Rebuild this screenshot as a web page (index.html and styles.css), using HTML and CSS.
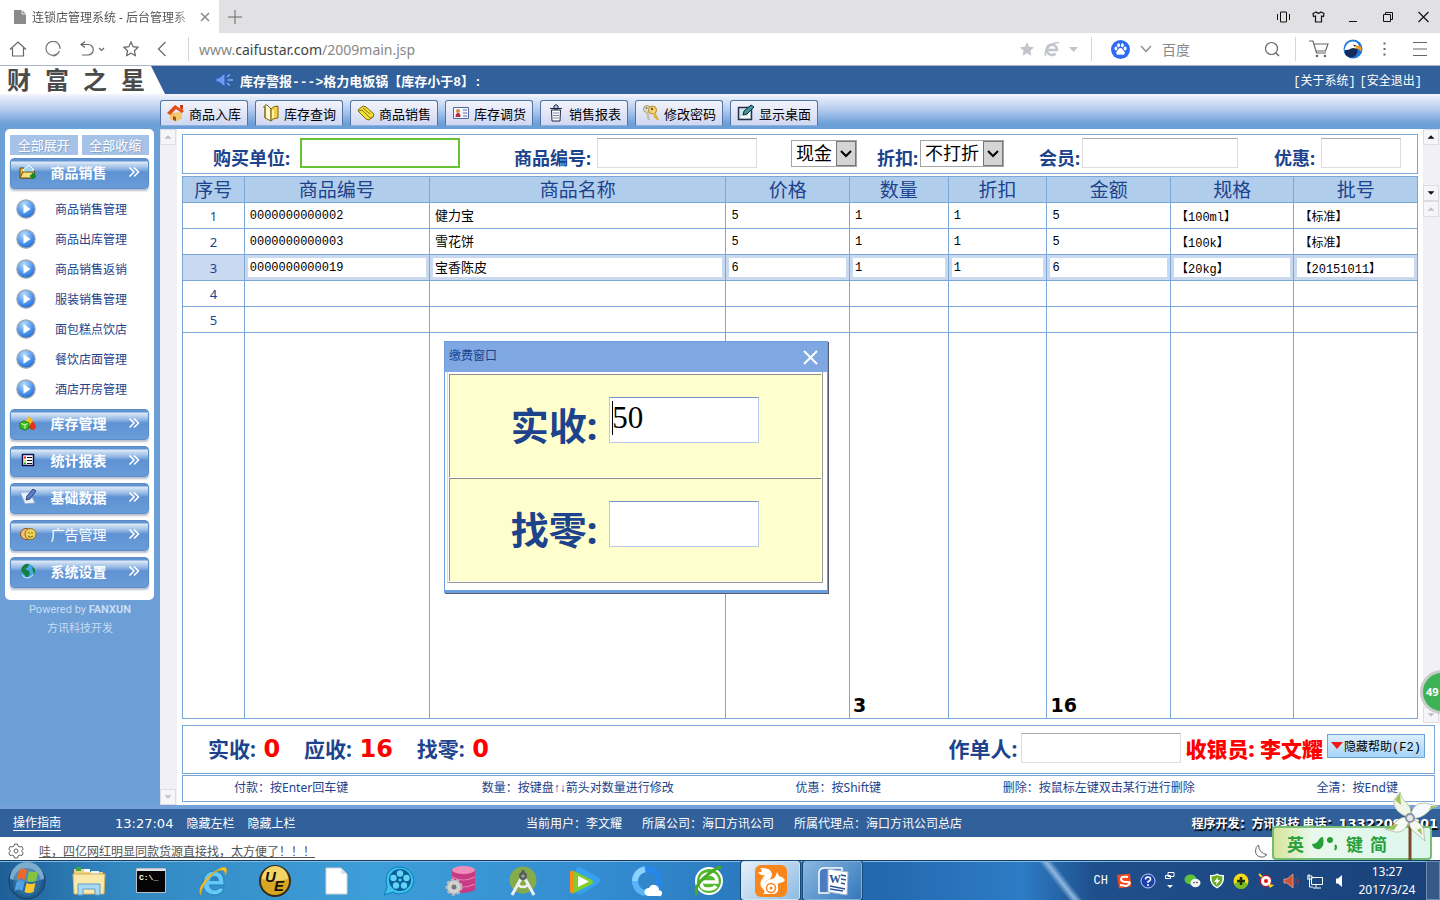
FILE: index.html
```html
<!DOCTYPE html>
<html lang="zh-CN">
<head>
    <meta charset="UTF-8">
    <meta name="viewport" content="width=device-width, initial-scale=1.0">
    <title>连锁店管理系统 - 后台管理系统</title>
    <link rel="stylesheet" href="styles.css">
</head>
<body>
    <svg class="defs" aria-hidden="true">
        <defs>
            <radialGradient id="ball" cx=".4" cy=".25" r=".8"><stop offset="0" stop-color="#b8dcff"/><stop offset=".6" stop-color="#4b94ee"/><stop offset="1" stop-color="#1f62c8"/></radialGradient>
            <symbol id="play" viewBox="0 0 20 20"><circle cx="10" cy="10" r="9.2" fill="url(#ball)" stroke="#a5a9b0" stroke-width="1.2"/><path d="M7.500 5.200v9.600l7-4.800z" fill="#fff"/></symbol>
            <symbol id="more" viewBox="0 0 12 12"><path d="M1.500 1.500 6 6l-4.500 4.500M6 1.500 10.500 6 6 10.500" fill="none" stroke="#fff" stroke-width="1.600"/></symbol>
            <symbol id="up" viewBox="0 0 16 16"><path d="M4 10h8L8 6z" fill="currentColor"/></symbol>
            <symbol id="down" viewBox="0 0 16 16"><path d="M4 6h8l-4 4z" fill="currentColor"/></symbol>
        </defs>
    </svg>

    <!-- browser tabs -->
    <div class="tabs">
        <div class="tab">
            <svg width="12" height="14" viewBox="0 0 12 14"><path d="M0 0h8l4 4v10H0z" fill="#8a8a8a"/><path d="M8 0v4h4" fill="none" stroke="#eee"/></svg>
            <span class="tab-title">连锁店管理系统 - 后台管理系</span>
            <button class="plain" aria-label="关闭标签"><svg width="10" height="10" viewBox="0 0 10 10"><path d="M1 1l8 8M9 1 1 9" stroke="#888" stroke-width="1.500"/></svg></button>
        </div>
        <button class="plain" aria-label="新标签"><svg width="14" height="14" viewBox="0 0 14 14"><path d="M7 0v14M0 7h14" stroke="#666"/></svg></button>
        <div class="window-buttons">
            <button class="plain" aria-label="侧边"><svg width="13" height="12" viewBox="0 0 13 12"><path d="M.5 3v6M12.500 3v6M3.500 1h6v10h-6z" fill="none" stroke="#111"/></svg></button>
            <button class="plain" aria-label="皮肤"><svg width="13" height="12" viewBox="0 0 13 12"><path d="M4 1 1 2.500 1.500 5.500 3.500 5v6h6V5l2 .5.500-3L9 1Q6.500 3.500 4 1z" fill="none" stroke="#111" stroke-width="1.200"/></svg></button>
            <button class="plain" aria-label="最小化"><svg width="13" height="12" viewBox="0 0 13 12"><path d="M2 10.500h8" stroke="#111"/></svg></button>
            <button class="plain" aria-label="还原"><svg width="13" height="12" viewBox="0 0 13 12"><path d="M1.500 3.500h7v7h-7zM3.500 3V1.500h7v7H9" fill="none" stroke="#111"/></svg></button>
            <button class="plain" aria-label="关闭"><svg width="13" height="12" viewBox="0 0 13 12"><path d="M1.500 1l10 10M11.500 1l-10 10" stroke="#111" stroke-width="1.200"/></svg></button>
        </div>
    </div>

    <!-- address bar -->
    <div class="address">
        <div class="nav-buttons">
            <button class="plain" aria-label="主页"><svg width="18" height="16" viewBox="0 0 18 16"><path d="M1 8.500 9 1l8 7.500M3.500 7v8h11V7" fill="none" stroke="#666" stroke-width="1.200"/></svg></button>
            <button class="plain" aria-label="刷新"><svg width="16" height="16" viewBox="0 0 16 16"><path d="M14.500 10A7 7 0 1 1 15 8M12 13.500A7 7 0 0 1 8 15" fill="none" stroke="#777" stroke-width="1.200"/></svg></button>
            <button class="plain" aria-label="恢复"><svg width="26" height="16" viewBox="0 0 26 16"><path d="M6 .5 2 3.500l4 3M2 3.500h7a5 5 0 0 1 0 10.500H3M20 7l2.500 2.500L25 7" fill="none" stroke="#666" stroke-width="1.200"/></svg></button>
            <button class="plain" aria-label="收藏"><svg width="16" height="16" viewBox="0 0 16 16"><path d="m8 1 2.100 4.700 5 .6-3.700 3.400 1 5L8 12.200l-4.400 2.500 1-5L.9 6.300l5-.6z" fill="none" stroke="#666" stroke-width="1.200"/></svg></button>
            <button class="plain" aria-label="后退"><svg width="10" height="16" viewBox="0 0 10 16"><path d="M8.500 1 1.500 8l7 7" fill="none" stroke="#666" stroke-width="1.200"/></svg></button>
        </div>
        <span class="url">www.<b>caifustar.com</b>/2009main.jsp</span>
        <div class="url-tools">
            <svg width="16" height="16" viewBox="0 0 16 16"><path d="m8 1 2.100 4.700 5 .6-3.700 3.400 1 5L8 12.200l-4.400 2.500 1-5L.9 6.300l5-.6z" fill="#c2c4cc"/></svg>
            <svg width="16" height="16" viewBox="0 0 16 16"><path d="M3 9h10a5.200 5.200 0 1 0-1.500 3.500" fill="none" stroke="#c2c4cc" stroke-width="2.500"/><path d="M2 15Q-1 11 6 5q6-5 9-3" fill="none" stroke="#c2c4cc" stroke-width="1.500"/></svg>
            <svg width="10" height="5" viewBox="0 0 10 5"><path d="M0 0h9L4.500 5z" fill="#c2c4cc"/></svg>
        </div>
        <div class="search">
            <svg width="19" height="19" viewBox="0 0 20 20"><circle cx="10" cy="10" r="10" fill="#2f6df0"/><g fill="#fff"><ellipse cx="5.200" cy="9" rx="1.500" ry="2.100"/><ellipse cx="8" cy="5.500" rx="1.500" ry="2.200"/><ellipse cx="12" cy="5.500" rx="1.500" ry="2.200"/><ellipse cx="14.900" cy="9" rx="1.500" ry="2.100"/><path d="M10 8.500c2 0 2.500 2 4 3.500 1.500 2-.5 4-2 3.500q-2-.6-4 0c-1.500.5-3.500-1.500-2-3.500 1.500-1.500 2-3.500 4-3.500z"/></g></svg>
            <svg width="12" height="8" viewBox="0 0 12 8"><path d="m1 1 5 5.500L11 1" fill="none" stroke="#888" stroke-width="1.300"/></svg>
            <input class="search-input" type="text" placeholder="百度" aria-label="百度搜索">
            <button class="plain" aria-label="搜索"><svg width="16" height="16" viewBox="0 0 16 16"><circle cx="7.500" cy="7.500" r="6" fill="none" stroke="#666" stroke-width="1.200"/><path d="m12 12 3 3" stroke="#666" stroke-width="1.400"/></svg></button>
        </div>
        <div class="extras">
            <svg width="20" height="18" viewBox="0 0 20 18"><path d="M0 1h4l3.500 12H17M5 4h14l-2.500 7H7" fill="none" stroke="#666" stroke-width="1.200"/><circle cx="8" cy="16" r="1.300" fill="#666"/><circle cx="16" cy="16" r="1.300" fill="#666"/></svg>
            <svg width="20" height="20" viewBox="0 0 20 20"><circle cx="10" cy="10" r="9.500" fill="#1d78de"/><path d="M2 15Q1 10 5 8l9 1q2 5-3 9-6 1.500-9-3z" fill="#152a5c"/><path d="M1.500 11Q3 3 9 2.500q5-.5 7 4l-3 3q-3-1-5 0-3 2-6.500 1.500z" fill="#fff"/><path d="M13 6.500q5-.5 5.500 3 0 2-1 3-.5-2.500-4.500-3z" fill="#f39a20"/><path d="M10 5.500l3 1-1 1.500z"/></svg>
            <svg width="4" height="16" viewBox="0 0 4 16"><path d="M.5 1.500h2v2h-2zM.5 7h2v2h-2zM.5 12.500h2v2h-2z" fill="#666"/></svg>
            <svg width="14" height="16" viewBox="0 0 14 16"><path d="M0 1.500h14M0 8h14M0 14.500h14" stroke="#666" stroke-width="1.200"/></svg>
        </div>
    </div>

    <!-- top banner -->
    <header class="banner">
        <h1 class="logo"><span>财</span><span>富</span><span>之</span><span>星</span></h1>
        <svg width="17" height="14" viewBox="0 0 17 14"><path d="M0 5h3l6-5v14L3 9H0z" fill="#6f9cf5" stroke="#2a55c5"/><path d="m11 4 3-2.500M11.500 7H17M11 10l3 2.500" stroke="#7fb0ff" stroke-width="1.300"/></svg>
        <p class="alarm">库存警报---&gt;格力电饭锅【库存小于8】:</p>
        <nav class="system-links"><a href="#about">[关于系统]</a><a href="#exit">[安全退出]</a></nav>
    </header>

    <div class="toolbar">
        <button class="tool"><svg width="18" height="18" viewBox="0 0 18 18"><path d="M3 9v6l6 2.500 6-3V8z" fill="#f3c66d"/><path d="M0 9 8 1l9 6-2 2-6-4-6 6z" fill="#e34a14"/><path d="M6 12l3 1v4l-3-1z" fill="#a8501c"/><path d="M13 1h3v5l-3-2z" fill="#c43c10"/></svg>商品入库</button>
        <button class="tool"><svg width="18" height="18" viewBox="0 0 18 18"><path d="M1 3h2v11l6 3V5L5 1H3v13" fill="#fffbd0" stroke="#7b6412"/><path d="M9 5q2-3 7-3v12q-5 0-7 3z" fill="#f4d04a" stroke="#7b6412"/><path d="M11 6v8" stroke="#fff3a4" stroke-width="2"/></svg>库存查询</button>
        <button class="tool"><svg width="18" height="18" viewBox="0 0 18 18"><path d="m1 6 5-4 3 1 8 7-1 3-4 3-3-1-7-7z" fill="#f4df37" stroke="#7d6c10"/><path d="m2 7 3-1 8 8 3-1M6 4l7 6" fill="none" stroke="#8c7a14"/></svg>商品销售</button>
        <button class="tool"><svg width="18" height="18" viewBox="0 0 18 18"><path d="M1.500 3.500h15v11h-15z" fill="#f5f7ff" stroke="#52679c"/><circle cx="6" cy="7" r="2" fill="#d88a40"/><path d="M3.500 13q0-4 2.500-4t2.500 4z" fill="#b3283c"/><path d="M11 6h4M11 9h4M11 12h4" stroke="#66a"/></svg>库存调货</button>
        <button class="tool"><svg width="18" height="18" viewBox="0 0 18 18"><path d="M4.500 6h9l-.5 11H5z" fill="#fff" stroke="#1f2740"/><path d="M3 4.500h12M7 2q2-3 4 0v3H7z" fill="#b6c8ee" stroke="#1f2740"/><path d="M6 9h6M6 11.500h6M6 14h6" stroke="#7787aa"/></svg>销售报表</button>
        <button class="tool"><svg width="18" height="18" viewBox="0 0 18 18"><circle cx="5" cy="5" r="3.500" fill="#dcdcd0" stroke="#a39a72"/><circle cx="4.500" cy="4" r="1" fill="#777"/><path d="m5 8 2 8" stroke="#c3bfa8" stroke-width="2.500"/><circle cx="10.500" cy="6" r="4" fill="#f5d778" stroke="#b58a25"/><circle cx="10" cy="5" r="1.200" fill="#7d5c10"/><path d="m12 9 4 7M14 12l-2 1.500" stroke="#dcb140" stroke-width="2.500"/></svg>修改密码</button>
        <button class="tool"><svg width="18" height="18" viewBox="0 0 18 18"><path d="M1.500 3.500h13v12h-13z" fill="#cfe6e6" stroke="#23324d" stroke-width="1.500"/><path d="M4 13h8V8" fill="none" stroke="#fff" stroke-width="2"/><path d="m6 11 1-4 7-6 3 2-7 7z" fill="#3e96a0" stroke="#142b40"/></svg>显示桌面</button>
    </div>

    <main class="main">
        <aside class="sidebar">
            <div class="menu">
                <div class="menu-tools"><button>全部展开</button><button>全部收缩</button></div>
                <button class="menu-head"><svg width="18" height="16" viewBox="0 0 18 16"><path d="M1 14V4h4l2 2h8v8z" fill="#e6b944" stroke="#5a4510"/><path d="m4 6 6-5 5 5-6 5z" fill="#9fd6ef" stroke="#fff"/><path d="m1 14 3-6h12l-3 6z" fill="#f8df7b" stroke="#6a5210"/><path d="M14 9v6M11 12h6" stroke="#178a28" stroke-width="2.500"/></svg><b>商品销售</b><svg class="more"><use href="#more"/></svg></button>
                <ul class="submenu">
                    <li><svg><use href="#play"/></svg><a href="#sale">商品销售管理</a></li>
                    <li><svg><use href="#play"/></svg><a href="#out">商品出库管理</a></li>
                    <li><svg><use href="#play"/></svg><a href="#return">商品销售返销</a></li>
                    <li><svg><use href="#play"/></svg><a href="#clothes">服装销售管理</a></li>
                    <li><svg><use href="#play"/></svg><a href="#bakery">面包糕点饮店</a></li>
                    <li><svg><use href="#play"/></svg><a href="#dining">餐饮店面管理</a></li>
                    <li><svg><use href="#play"/></svg><a href="#hotel">酒店开房管理</a></li>
                </ul>
                <button class="menu-head"><svg width="18" height="16" viewBox="0 0 18 16"><path d="m10 1 5 6-5 4-4-4z" fill="#f8c01b"/><path d="m12 8 2-2 3 5q0 4-4 4l-3-2z" fill="#df3420"/><path d="m1 8 4-2 5 2v5l-4 2-5-2z" fill="#41bd24" stroke="#1b7a12"/><path d="m2 8.500 4 1.500 3-1.500M6 10v4" fill="none" stroke="#caffb0"/></svg><b>库存管理</b><svg class="more"><use href="#more"/></svg></button>
                <button class="menu-head"><svg width="18" height="16" viewBox="0 0 18 16"><path d="M3.500 2.500h11v11h-11z" fill="#fff" stroke="#101050" stroke-width="1.500"/><path d="M8 5.500h5M8 8.500h5M8 11.500h5" stroke="#111"/><path d="M5 4.500h2v2H5z" fill="#e22"/><path d="M5 7.500h2v2H5z" fill="#ed2"/><path d="M5 10.500h2v2H5z" fill="#2a2"/></svg><b>统计报表</b><svg class="more"><use href="#more"/></svg></button>
                <button class="menu-head"><svg width="18" height="16" viewBox="0 0 18 16"><path d="M1 3h10l5 11-10 1z" fill="#e8f0fc" stroke="#8ba4cf"/><path d="m7 11 1-4 6-7 3 2-6 8z" fill="#597ec4" stroke="#2d4680"/></svg><b>基础数据</b><svg class="more"><use href="#more"/></svg></button>
                <button class="menu-head"><svg width="18" height="16" viewBox="0 0 18 16"><circle cx="7" cy="8" r="5.500" fill="#eebf77" stroke="#8a4f1f"/><circle cx="11.500" cy="8" r="5.500" fill="#f0d15a" stroke="#92701b"/><path d="M10 6v1.500M13 6v1.500M9 10q2.500 2.500 5 0" fill="none" stroke="#7a5a10"/></svg><span>广告管理</span><svg class="more"><use href="#more"/></svg></button>
                <button class="menu-head"><svg width="18" height="16" viewBox="0 0 18 16"><circle cx="9" cy="8" r="7" fill="#48a7e6"/><path d="M3 4q3-4 7-3l-1 3-3 2 4 2 1 3-3 4-3-4-3-3zM13 4l3 2v5l-2-2z" fill="#15803a"/><path d="M3 12q5 6 11 0" fill="none" stroke="#d9eefb"/></svg><b>系统设置</b><svg class="more"><use href="#more"/></svg></button>
            </div>
            <p class="powered">Powered by <b>FANXUN</b></p>
            <p class="powered">方讯科技开发</p>
        </aside>
        <div class="scrollbar off">
            <svg><use href="#up"/></svg>
            <svg><use href="#down"/></svg>
        </div>

        <section class="content">
            <div class="upper">
                <div class="sheet">
                    <form class="filter">
                        <div class="field"><label for="buyer">购买单位:</label><input class="long focused" id="buyer" type="text"></div>
                        <div class="field"><label for="code">商品编号:</label><input class="long" id="code" type="text"></div>
                        <div class="field"><select aria-label="付款方式"><option>现金</option></select></div>
                        <div class="field tight"><label for="discount">折扣:</label><select id="discount"><option>不打折</option></select></div>
                        <div class="field tight"><label for="member">会员:</label><input class="member" id="member" type="text"></div>
                        <div class="field"><label for="off">优惠:</label><input class="short" id="off" type="text"></div>
                    </form>
                    <div class="table-box">
                        <table class="goods">
                            <colgroup><col class="c5"><col class="c15"><col class="c24"><col class="c10"><col class="c8"><col class="c8"><col class="c10"><col class="c10"><col class="c10"></colgroup>
                            <thead>
                                <tr><th>序号</th><th>商品编号</th><th>商品名称</th><th>价格</th><th>数量</th><th>折扣</th><th>金额</th><th>规格</th><th>批号</th></tr>
                            </thead>
                            <tbody>
                                <tr><td>1</td><td><input aria-label="商品编号" value="0000000000002"></td><td><input class="name" aria-label="商品名称" value="健力宝"></td><td><input aria-label="价格" value="5"></td><td><input aria-label="数量" value="1"></td><td><input aria-label="折扣" value="1"></td><td><input aria-label="金额" value="5"></td><td><input aria-label="规格" value="【100ml】"></td><td><input aria-label="批号" value="【标准】"></td></tr>
                                <tr><td>2</td><td><input aria-label="商品编号" value="0000000000003"></td><td><input class="name" aria-label="商品名称" value="雪花饼"></td><td><input aria-label="价格" value="5"></td><td><input aria-label="数量" value="1"></td><td><input aria-label="折扣" value="1"></td><td><input aria-label="金额" value="5"></td><td><input aria-label="规格" value="【100k】"></td><td><input aria-label="批号" value="【标准】"></td></tr>
                                <tr class="selected"><td>3</td><td><input aria-label="商品编号" value="0000000000019"></td><td><input class="name" aria-label="商品名称" value="宝香陈皮"></td><td><input aria-label="价格" value="6"></td><td><input aria-label="数量" value="1"></td><td><input aria-label="折扣" value="1"></td><td><input aria-label="金额" value="6"></td><td><input aria-label="规格" value="【20kg】"></td><td><input aria-label="批号" value="【20151011】"></td></tr>
                                <tr><td>4</td><td></td><td></td><td></td><td></td><td></td><td></td><td></td><td></td></tr>
                                <tr><td>5</td><td></td><td></td><td></td><td></td><td></td><td></td><td></td><td></td></tr>
                                <tr class="total"><td></td><td></td><td></td><td></td><td>3</td><td></td><td>16</td><td></td><td></td></tr>
                            </tbody>
                        </table>
                    </div>
                </div>
                <div class="bars">
                    <div class="scrollbar on"><svg><use href="#up"/></svg><svg><use href="#down"/></svg></div>
                    <div class="scrollbar off"><svg><use href="#up"/></svg><svg><use href="#down"/></svg></div>
                </div>
            </div>

            <div class="summary">
                <p>实收: <b>0</b></p>
                <p>应收: <b>16</b></p>
                <p>找零: <b>0</b></p>
                <div class="cashier">
                    <label for="maker">作单人:</label><input class="long" id="maker" type="text">
                    <strong>收银员: 李文耀</strong>
                    <button class="help-toggle"><svg width="12" height="7" viewBox="0 0 12 7"><path d="M0 0h12L6 7z" fill="#f01818"/></svg>隐藏帮助(F2)</button>
                </div>
            </div>
            <div class="help">
                <span class="pay-key">付款：按Enter回车键</span>
                <span>数量：按键盘<span class="arrows">↑↓</span>箭头对数量进行修改</span>
                <span>优惠：按Shift键</span>
                <span>删除：按鼠标左键双击某行进行删除</span>
                <span>全清：按End键</span>
            </div>
        </section>

        <div class="dialog" role="dialog" aria-labelledby="pay-title">
            <div class="dialog-head">
                <h2 id="pay-title">缴费窗口</h2>
                <button class="plain" aria-label="关闭窗口"><svg width="15" height="15" viewBox="0 0 15 15"><path d="m1 1 13 13M14 1 1 14" stroke="#fff" stroke-width="2"/></svg></button>
            </div>
            <div class="dialog-body">
                <div class="pay-row"><label for="paid">实收:</label><div class="pay-input caret"><input id="paid" type="text" value="50"></div></div>
                <div class="pay-row"><label for="change">找零:</label><div class="pay-input"><input id="change" type="text"></div></div>
            </div>
        </div>
    </main>

    <footer class="status">
        <div class="status-left"><a class="guide" href="#guide">操作指南</a><span class="time">13:27:04</span><a href="#left">隐藏左栏</a><a href="#top">隐藏上栏</a></div>
        <div class="status-mid"><span>当前用户：李文耀</span><span>所属公司：海口方讯公司</span><span>所属代理点：海口方讯公司总店</span></div>
        <p class="developer">程序开发：方讯科技 电话：<b>13322098801</b></p>
    </footer>

    <div class="news">
        <svg width="16" height="16" viewBox="0 0 16 16"><path d="m6.500 1-.5 2-2 1-2-.5L.8 6 2.500 8 .8 10 2 12.500 4 12l2 1 .5 2h3l.5-2 2-1 2 .5 1.200-2.500L13.500 8l1.700-2L14 3.500 12 4l-2-1-.5-2z" fill="none" stroke="#666"/><circle cx="8" cy="8" r="2" fill="none" stroke="#666"/></svg>
        <a href="#news">哇，四亿网红明显同款货源直接找，太方便了！！！</a>
        <svg class="moon" width="14" height="14" viewBox="0 0 14 14"><path d="M4.500 1Q5 9.500 13 10.500 10 14 6 13 1.500 11.500 1.500 7 1.500 3 4.500 1z" fill="none" stroke="#666"/></svg>
    </div>

    <!-- windows taskbar -->
    <div class="taskbar">
        <button class="start" aria-label="开始"><svg width="38" height="38" viewBox="0 0 38 38"><circle cx="19" cy="19" r="18" fill="#235a8c" stroke="#123c66"/><path d="M2 17a17 17 0 0 1 34 0q-17 6-34 0z" fill="#7cadcf"/><circle cx="19" cy="20" r="14" fill="#2f74a8" opacity=".6"/><path d="M11 8q4-3 8 0l-2 10q-4-3-8 0z" fill="#ee6a2a"/><path d="M21 9q4 2 9 0l-2 10q-5 2-9 0z" fill="#86c440"/><path d="M8.500 20q4-3 8 0l-2 9q-4-3-8 0z" fill="#50a4e6"/><path d="M18.500 21q4 2 9 0l-2 9q-5 2-9 0z" fill="#fcc62f"/></svg></button>
        <button class="task" aria-label="资源管理器"><svg width="34" height="30" viewBox="0 0 34 30"><path d="M2 3h10l2 3h17v22H2z" fill="#eed27f"/><path d="M4 1h5v4H4z" fill="#3fa650"/><path d="M12 3h6v3h-6z" fill="#fff"/><path d="M19 5h8v3h-8z" fill="#e9f3ff"/><path d="M1 8h32l-1 20H2z" fill="#fae9ab" stroke="#d3b35b"/><path d="M6 29V18h22v11h-5v-6H11v6z" fill="#a9daf4" stroke="#5c9fc8"/></svg></button>
        <button class="task" aria-label="命令行"><svg width="30" height="25" viewBox="0 0 30 25"><path d="M.5.5h29v24H.5z" fill="#050505" stroke="#b8bfc8"/><path d="M1 1h28v2H1z" fill="#dfe3e8"/><text x="3" y="12" class="cmd-text">C:\_</text></svg></button>
        <button class="task" aria-label="浏览器"><svg width="32" height="32" viewBox="0 0 32 32"><path d="M27 20H12.500q.5 5 5.500 5 3 0 4-2h5q-2 7-10 7Q6 29 6 18 7 6 17.500 6 28 7 27 20z" fill="#65c9f7" stroke="#237fc1"/><path d="M12.500 16q1-5 5-5t4.500 5z" fill="#2d80be"/><path d="M4 30Q-1 24 12 11 25 0 29 3q2 3-1 7 1-5-4-5-6 0-14 11-7 9-6 14z" fill="#f8c832" stroke="#d39b13" stroke-width=".7"/></svg></button>
        <button class="task" aria-label="UltraEdit"><svg width="32" height="32" viewBox="0 0 32 32"><circle cx="16" cy="16" r="15" fill="#d7a622" stroke="#332a1a" stroke-width="2"/><path d="M3 14a13 13 0 0 1 26 0q-13 4-26 0z" fill="#f3d569"/><text x="6" y="17" class="ue-text">U</text><text x="15" y="26" class="ue-text">E</text></svg></button>
        <button class="task" aria-label="文档"><svg width="24" height="28" viewBox="0 0 24 28"><path d="M1 1h15l6 6v20H1z" fill="#fff" stroke="#cbd3dd"/><path d="M16 1v6h6z" fill="#dbe1e9"/></svg></button>
        <button class="task" aria-label="视频"><svg width="32" height="32" viewBox="0 0 32 32"><path d="M1 30l3-8Q0 6 13 2q16-1 18 13-1 13-15 14-3 0-6-2z" fill="#3fc1ee" stroke="#087eb5"/><circle cx="17" cy="15" r="11" fill="#075f96"/><g fill="#63d3f8"><circle cx="17" cy="8.500" r="3.200"/><circle cx="23.500" cy="13" r="3.200"/><circle cx="21" cy="20.500" r="3.200"/><circle cx="13" cy="20.500" r="3.200"/><circle cx="10.500" cy="13" r="3.200"/><circle cx="17" cy="15" r="1.500"/></g></svg></button>
        <button class="task" aria-label="数据库"><svg width="32" height="32" viewBox="0 0 32 32"><path d="M7 5v20q11 6 23 0V5z" fill="#c83a83"/><ellipse cx="18.500" cy="5" rx="11.500" ry="4" fill="#f08dba"/><path d="M7 12q11 6 23 0M7 19q11 6 23 0" fill="none" stroke="#e27fb0" stroke-width="1.200"/><circle cx="9" cy="22" r="7" fill="#ccc" stroke="#bbb" stroke-width="3" stroke-dasharray="3 2"/><circle cx="9" cy="22" r="6" fill="#d2d2d2"/><circle cx="9" cy="22" r="2.500" fill="#777"/></svg></button>
        <button class="task" aria-label="Android Studio"><svg width="30" height="32" viewBox="0 0 30 32"><circle cx="15" cy="15" r="13.500" fill="#84ac4c"/><path d="M15 10 4 30M15 10l11 20" stroke="#eef1f3" stroke-width="3"/><path d="M9 19q6 6 12 0" fill="none" stroke="#eef1f3" stroke-width="2.500"/><circle cx="15" cy="11" r="4" fill="#575d5f"/><path d="M15 5v5" stroke="#575d5f" stroke-width="3"/><circle cx="15" cy="11" r="1.500" fill="#a4b398"/></svg></button>
        <button class="task" aria-label="播放器"><svg width="34" height="30" viewBox="0 0 34 30"><path d="M8 2q3-2 6 0l17 10q3 3 0 5L14 28q-5 2-6-2z" fill="#36a0f1"/><path d="M2 7q0-3 4-2l18 9q2 2 0 4L6 27q-4 1-4-3z" fill="#80cf2b"/><path d="M2 7q0-3 4-2v22q-4 1-4-3z" fill="#fb8b1c"/><path d="M10 10v11l11-5.500z" fill="#fff"/></svg></button>
        <button class="task" aria-label="QQ浏览器"><svg width="32" height="32" viewBox="0 0 32 32"><circle cx="16" cy="16" r="12" fill="none" stroke="#2688eb" stroke-width="6"/><path d="M4 16A12 12 0 0 1 14 4.200" fill="none" stroke="#8bd2ff" stroke-width="6"/><path d="M4 16a12 12 0 0 0 10 12" fill="none" stroke="#5ab4f5" stroke-width="6"/><path d="M17 31q-4-1-3.500-4.500T18 23q2-4 6-3t4 5q4 1 3 4t-3 2z" fill="#fff"/></svg></button>
        <button class="task" aria-label="360浏览器"><svg width="32" height="32" viewBox="0 0 32 32"><circle cx="16" cy="16" r="13" fill="#52b82e" stroke="#fff" stroke-width="2"/><path d="M9 17h15q0-8-8-8t-8 8 8 7q5 0 7-3" fill="none" stroke="#fff" stroke-width="3.500"/><path d="M4 30Q0 22 12 12 22 3 28 2" fill="none" stroke="#48ab22" stroke-width="3"/></svg></button>
        <button class="task current" aria-label="UC浏览器"><svg width="34" height="34" viewBox="0 0 34 34"><rect x="1" y="1" width="32" height="32" rx="6" fill="#f9851d"/><path d="M6 4q11-1 12 6 0 4-4 6-3 1-3 3 3-4 7-4 3-1 4-4l1-3 2 4q4 1 6 4-2 3-6 3-2 1-1 4 1 6-4 7H9q3-2 0-5-4-3-2-8 2-4 4-6-5 1-7-3 3 1 4-1-1-2-2-3z" fill="#fff"/><circle cx="17" cy="24" r="4.500" fill="none" stroke="#f9851d" stroke-width="1.500"/><circle cx="17" cy="24" r="1.500" fill="#f9851d"/></svg></button>
        <button class="task open" aria-label="Word"><svg width="32" height="30" viewBox="0 0 32 30"><path d="M2 27V7q0-5 6-5h17v3H12v22z" fill="#4d7bc0" stroke="#fff" stroke-width="1.500"/><path d="M11 3 31 6l-1 23-19-3z" fill="#fff" stroke="#a2b8d9"/><text x="12" y="17" class="word-text">W</text><path d="M24 9l5 1M24 13l5 1M24 17l4 1M13 20l15 3M13 23l13 2" stroke="#2c5498" stroke-width="1.500"/></svg></button>

        <div class="tray">
            <span class="lang">CH</span>
            <svg width="16" height="16" viewBox="0 0 16 16"><path d="m1 2 13-1.500 1.500 13L3 15.500z" fill="#f04a1d"/><path d="M12 4Q5 3 5 6t6 3-.5 4L4 12" fill="none" stroke="#fff" stroke-width="2"/></svg>
            <svg width="16" height="16" viewBox="0 0 16 16"><circle cx="8" cy="8" r="7" fill="#1c3fae" stroke="#c3cff0"/><path d="M5.500 6.500q0-2.500 2.500-2.500t2.500 2-2.500 2.500V10" fill="none" stroke="#fff" stroke-width="1.500"/><circle cx="8" cy="12" r="1" fill="#fff"/></svg>
            <svg width="12" height="20" viewBox="0 0 12 20"><path d="M4 1.500h6v4H4zM1.500 4.500h5v3h-5z" fill="none" stroke="#fff"/><path d="M3 14h6l-3 3z" fill="#fff"/></svg>
            <svg width="17" height="16" viewBox="0 0 17 16"><ellipse cx="6.500" cy="6.500" rx="6" ry="5" fill="#5ec23c"/><ellipse cx="11.500" cy="10" rx="5" ry="4.200" fill="#f3f5f3"/><circle cx="10" cy="9.500" r=".7"/><circle cx="13" cy="9.500" r=".7"/></svg>
            <svg width="16" height="16" viewBox="0 0 16 16"><path d="M8 .5q3 2 7 1.500 1 10-7 13.500Q0 12 1 2q4 .5 7-1.500z" fill="#fff"/><path d="M8 2q3 1.500 5.500 1.200Q14 11 8 14 2 11 2.500 3.200 5 3.500 8 2z" fill="#6aab28"/><path d="M9 4 5 9h2.500L7 12l4-5H8.500z" fill="#fff"/></svg>
            <svg width="17" height="16" viewBox="0 0 17 16"><circle cx="8" cy="8" r="7.500" fill="#f5d81b"/><path d="M1 11q7-5 14 0-2 5-7 5t-7-5z" fill="#7dbb1e"/><path d="M8 4v8M4 8h8" stroke="#17320d" stroke-width="2.500"/></svg>
            <svg width="17" height="16" viewBox="0 0 17 16"><path d="m1 1 4 4" stroke="#f3d71d" stroke-width="2"/><circle cx="8" cy="8" r="5.500" fill="#fff" stroke="#d02"/><circle cx="8" cy="8" r="2" fill="#e11"/><path d="m10 11 6 1-4 3z" fill="#f7df27"/></svg>
            <svg width="16" height="16" viewBox="0 0 16 16"><path d="M1 6h3l6-5v14l-6-5H1z" fill="#c9553a" stroke="#ffb49c" stroke-width=".7"/><path d="M12 5q2 3 0 6M14 3q3 5 0 10" fill="none" stroke="#9c3a29"/></svg>
            <svg width="17" height="16" viewBox="0 0 17 16"><path d="M4.500 4.500h11v7h-11zM9 12v2.500M6 15h8M2 1v5M0 3h5v3H0zM2.500 6v8H6" fill="none" stroke="#fff"/></svg>
            <svg width="16" height="16" viewBox="0 0 16 16"><path d="M4 5.500h2L10 2v12l-4-3.500H4z" fill="#fff"/></svg>
        </div>
        <div class="clock">13:27<br>2017/3/24</div>
        <button class="show-desktop" aria-label="显示桌面"></button>
    </div>

    <!-- floating widgets -->
    <div class="speed-ball">49</div>
    <div class="ime">
        <span>英</span>
        <svg width="28" height="16" viewBox="0 0 28 16"><path d="M1 9q4 0 6-3 2-4 5-4 2 9-3 12-7 1-8-5z" fill="#27a03a"/><circle cx="19" cy="5" r="3" fill="#27a03a"/><path d="M24 10q2 2 0 5" fill="none" stroke="#27a03a" stroke-width="2"/></svg>
        <span>键</span><span>简</span>
    </div>
    <svg class="pinwheel" width="56" height="70" viewBox="0 0 56 70">
        <path d="M26 28v40" stroke="#7a4a28" stroke-width="3"/>
        <g stroke="#9db08c" stroke-width=".7">
            <path d="M26 26Q8 20 10 8l6-8q2 8 7 11 6 6 3 15z" fill="#eef5e6"/>
            <path d="M26 26Q28 10 41 11l13 3q-7 2-10 6-8 8-18 6z" fill="#f6f9fd"/>
            <path d="M26 26q16 6 14 17l1 6q-6-5-9-8-9-5-6-15z" fill="#f3f8f0"/>
            <path d="M26 26Q22 42 11 40L1 37q7-1 10-6 6-8 15-5z" fill="#f7faf3"/>
        </g>
        <path d="m11 8 5-7 1 12zM2 37q7-5 12-5l-4 6zM33 38l5 5-1-7zM47 14l5 0-7 4z" fill="#9cc25a"/>
        <circle cx="26" cy="26" r="4" fill="#e5e8ee" stroke="#8b93a2" stroke-width="2"/>
    </svg>
</body>
</html>
```
FILE: styles.css
```css
* {
    box-sizing: border-box;
}

body {
    margin: 0;
    height: 100vh;
    display: flex;
    flex-direction: column;
    overflow: hidden;
    position: relative;
    background-color: #fff;
    color: #1c438c;
    font-family: "Noto Sans", "Noto Sans CJK SC", sans-serif;
    font-size: 12px;
}

p, h1, h2, ul {
    margin: 0;
    padding: 0;
}

svg {
    display: block;
    flex: none;
}

a {
    color: inherit;
    text-decoration: none;
}

button, input, select {
    font-family: inherit;
    font-size: inherit;
    color: inherit;
}

button {
    cursor: pointer;
}

.defs {
    position: absolute;
    width: 0;
    height: 0;
}

.plain {
    padding: 0;
    border: none;
    background: none;
}

/* browser */
.tabs {
    flex: none;
    display: flex;
    align-items: center;
    gap: 9px;
    height: 33px;
    background-color: #e1e1e4;
}

.tab {
    display: flex;
    align-items: center;
    gap: 6px;
    width: 219px;
    height: 33px;
    padding: 0 9px 0 14px;
    background-color: #fff;
    color: #555;
}

.tab-title {
    flex: 1;
    white-space: nowrap;
    mask-image: linear-gradient(to right, #000 88%, transparent);
}

.window-buttons {
    display: flex;
    gap: 22px;
    margin: 0 10px 0 auto;
}

.address {
    flex: none;
    display: flex;
    align-items: center;
    height: 33px;
    border-bottom: 1px solid #aab4c4;
}

.nav-buttons {
    display: flex;
    align-items: center;
    gap: 18px;
    width: 189px;
    height: 24px;
    padding-left: 9px;
    border-right: 1px solid #d5d5dc;
}

.url {
    padding-left: 10px;
    font-size: 14px;
    color: #888;
}

.url b {
    font-weight: normal;
    color: #444;
}

.url-tools {
    display: flex;
    align-items: center;
    gap: 9px;
    margin-left: auto;
    padding-right: 12px;
}

.search {
    display: flex;
    align-items: center;
    gap: 10px;
    width: 205px;
    height: 24px;
    padding: 0 15px 0 19px;
    border: solid #d5d5dc;
    border-width: 0 1px;
}

.search-input {
    flex: 1;
    min-width: 0;
    padding: 0;
    border: none;
    font-size: 14px;
}

.search-input::placeholder {
    color: #888;
}

.extras {
    display: flex;
    align-items: center;
    gap: 14px;
    padding: 0 13px;
}

.extras svg:nth-child(3) {
    margin: 0 12px 0 6px;
}

/* banner */
.banner {
    flex: none;
    display: flex;
    align-items: center;
    height: 28px;
    background-color: #32609a;
    color: #fff;
}

.logo {
    display: flex;
    gap: 14px;
    width: 165px;
    height: 28px;
    margin-right: 51px;
    padding-left: 7px;
    background-color: #fff;
    clip-path: polygon(0 0, 151px 0, 165px 100%, 0 100%);
    color: #4a4a4a;
    font-size: 24px;
    line-height: 28px;
}

.alarm, .system-links {
    font-family: "Liberation Mono", "Noto Sans CJK SC", monospace;
}

.alarm {
    padding-left: 7px;
    font-size: 13px;
    font-weight: bold;
}

.system-links {
    display: flex;
    gap: 4px;
    margin: 0 18px 0 auto;
}

.toolbar {
    flex: none;
    display: flex;
    gap: 7px;
    height: 35px;
    padding: 6px 0 0 160px;
    background: linear-gradient(#f2f5fc, #b3cbee 45%, #6b9fd8 85%);
}

.tool {
    display: flex;
    align-items: center;
    justify-content: center;
    gap: 4px;
    width: 88px;
    height: 26px;
    padding: 0;
    border: 1px solid #5375a6;
    border-bottom-color: #8fb0de;
    border-radius: 3px 3px 0 0;
    background: linear-gradient(#f3f4fb, #d0d7f2);
    color: #000;
    font-size: 13px;
    white-space: nowrap;
}

.main {
    position: relative;
    flex: 1;
    display: flex;
    min-height: 0;
    border-bottom: 4px solid #74a1da;
}

/* sidebar */
.sidebar {
    flex: none;
    width: 160px;
    background-color: #6b9fd6;
    text-align: center;
}

.menu {
    display: flex;
    flex-direction: column;
    gap: 6px;
    margin: 0 6px 0 5px;
    padding: 6px 5px 12px;
    border-radius: 5px;
    background-color: #fff;
}

.menu-tools {
    display: flex;
    gap: 4px;
    height: 20px;
    margin-bottom: -3px;
}

.menu-tools button {
    flex: 1;
    padding: 0;
    border: none;
    background-color: #a6c2e6;
    color: #fff;
    font-size: 13px;
    line-height: 20px;
    text-shadow: 1px 1px #8aa6cc;
}

.menu-head {
    display: flex;
    align-items: center;
    height: 31px;
    padding: 0 8px 3px;
    border: 1px solid #5b8cc8;
    border-radius: 4px;
    background: linear-gradient(#5f93d2 2px, #dfeaf8 3px, #8db3e2 10px, #5e92d2 13px, #699cd8);
    box-shadow: 0 2px 2px #b9c2cf;
    color: #fff;
    font-size: 14px;
}

.menu-head b, .menu-head span {
    flex: 1;
    padding-right: 8px;
}

.more {
    width: 12px;
    height: 12px;
}

.submenu {
    list-style: none;
    margin: -1px 0;
}

.submenu li {
    display: flex;
    align-items: center;
    height: 30px;
    padding-left: 6px;
}

.submenu svg {
    width: 20px;
    height: 20px;
}

.submenu a {
    margin-left: 19px;
    padding-bottom: 1px;
}

.powered {
    color: #c9dcf4;
    font-family: Roboto, "Noto Sans CJK SC", sans-serif;
    font-size: 11px;
    line-height: 19px;
}

/* scrollbars */
.scrollbar {
    flex: none;
    display: flex;
    flex-direction: column;
    justify-content: space-between;
    width: 17px;
    background-color: #f1f0f7;
    color: #111;
}

.scrollbar svg {
    width: 16px;
    height: 16px;
    border: 1px solid #dcdce4;
    background-color: #f6f6f9;
}

.off {
    color: #c0c0c4;
}

.on {
    height: 72px;
}

.bars {
    display: flex;
    flex-direction: column;
}

.bars .off {
    flex: 1;
}

/* content */
.content {
    flex: 1;
    display: flex;
    flex-direction: column;
    min-width: 0;
    padding: 0 0 3px 5px;
}

.upper {
    flex: 1;
    display: flex;
    gap: 5px;
    min-height: 0;
}

.sheet {
    flex: 1;
    display: flex;
    flex-direction: column;
    gap: 2px;
    padding: 5px 0 4px;
}

.filter, .summary, .help {
    border: 1px solid #7ba6d8;
}

.filter {
    display: grid;
    grid-template-columns: 301fr 277fr 86fr 162fr 235fr 143fr;
    height: 40px;
    padding: 0 0 2px 30px;
}

.field {
    display: flex;
    align-items: center;
    gap: 6px;
    font-size: 18px;
}

.field label {
    padding-top: 8px;
    font-weight: bold;
    white-space: nowrap;
}

.tight {
    gap: 2px;
}

input {
    min-width: 0;
    border: 1px solid #ddd;
    border-top-color: #aaa;
    background-color: #fff;
    color: #000;
}

.long, .member, .short {
    width: 160px;
    height: 30px;
}

.member {
    width: 156px;
}

.short {
    width: 80px;
}

.focused {
    border: 2px solid #66c334;
    margin-left: 4px;
}

select {
    appearance: none;
    height: 27px;
    padding: 0 24px 0 4px;
    border: 1px solid #a5a5a8;
    border-radius: 0;
    background: url("data:image/svg+xml,%3Csvg xmlns='http://www.w3.org/2000/svg' width='20' height='25'%3E%3Crect x='.5' y='.5' width='19' height='24' fill='%23d4d4d4' stroke='%23777'/%3E%3Cpath d='M5 10l5 5 5-5' fill='none' stroke='%23000' stroke-width='2'/%3E%3C/svg%3E") right center no-repeat #fff;
    color: #000;
    font-size: 18px;
    line-height: 24px;
}

.table-box {
    flex: 1;
    min-height: 0;
}

.goods {
    width: 100%;
    height: 100%;
    table-layout: fixed;
    border-collapse: collapse;
}

.c5 { width: 5%; }
.c8 { width: 8%; }
.c10 { width: 10%; }
.c15 { width: 15%; }
.c24 { width: 24%; }

.goods th, .goods td {
    height: 26px;
    padding: 0 3px;
    border: 1px solid #7ba6d8;
    line-height: 20px;
}

.goods th {
    background-color: #b1cdec;
    font-size: 19px;
    font-weight: normal;
}

.goods td:first-child {
    text-align: center;
    font-size: 13px;
}

.goods input {
    display: block;
    width: 100%;
    height: 19px;
    padding: 0 2px;
    border: none;
    font-family: "Liberation Mono", "Noto Sans CJK SC", monospace;
}

.goods .name {
    padding-bottom: 2px;
    font-size: 13px;
}

.selected td {
    background-color: #c8d9f0;
}

.goods .total td {
    height: auto;
    padding: 0 3px 3px;
    vertical-align: bottom;
    color: #000;
    font-family: "DejaVu Sans", sans-serif;
    font-size: 19px;
    font-weight: bold;
}

.summary {
    display: flex;
    align-items: center;
    gap: 24px;
    height: 49px;
    margin: 2px 5px 1px 0;
    padding: 0 9px 4px 25px;
    font-size: 21px;
    font-weight: bold;
    white-space: nowrap;
}

.summary b {
    margin-left: 2px;
    color: #f00;
    font-family: "DejaVu Sans", sans-serif;
    font-size: 24px;
}

.cashier {
    display: flex;
    align-items: center;
    gap: 4px;
    margin-left: auto;
}

.cashier strong {
    color: #f00;
}

.help-toggle {
    display: flex;
    align-items: center;
    justify-content: center;
    gap: 1px;
    width: 98px;
    height: 24px;
    margin-bottom: 4px;
    padding: 0;
    border: 1px solid #6fa3d3;
    background: linear-gradient(#dceefc, #a6d4f7);
    color: #000;
    font-family: "Liberation Mono", "Noto Sans CJK SC", monospace;
    font-size: 12px;
}

.help {
    display: flex;
    align-items: center;
    justify-content: space-between;
    height: 27px;
    margin-right: 5px;
    padding: 0 36px 3px 51px;
}

.pay-key {
    padding-right: 12px;
}

.arrows {
    font-family: "Liberation Sans", sans-serif;
}

/* payment dialog, over the sheet */
.dialog {
    position: absolute;
    left: 444px;
    top: 212px;
    width: 384px;
    border: 1px solid #6c9fe0;
    border-bottom: 3px solid #6c9fe0;
    box-shadow: 1px 1px #555c70;
    background-color: #fff;
}

.dialog-head {
    display: flex;
    align-items: center;
    justify-content: space-between;
    height: 30px;
    padding: 0 9px 0 4px;
    background-color: #7fa8e2;
}

.dialog-head h2 {
    padding-bottom: 4px;
    font-size: 12px;
    font-weight: normal;
}

.dialog-body {
    margin: 0 4px 7px 2px;
    padding: 2px 1px 0;
    border: 1px solid #9a9a9a;
    border-top: none;
    border-left-color: #ddd;
}

.pay-row {
    display: flex;
    justify-content: center;
    gap: 12px;
    height: 103px;
    margin-bottom: 1px;
    padding: 22px 1px 0 0;
    border-top: 1px solid #8e8e84;
    border-left: 1px solid #8e8e84;
    background-color: #ffffce;
}

.pay-row label {
    font-size: 38px;
    font-weight: bold;
    line-height: 56px;
}

.pay-input {
    position: relative;
}

.pay-input input {
    width: 150px;
    height: 46px;
    padding: 0 2px 5px;
    border: 1px solid #b5cbe8;
    border-top-color: #6f94c4;
    font-family: "Liberation Serif", serif;
    font-size: 31px;
}

.caret::before {
    content: "";
    position: absolute;
    left: 3px;
    top: 4px;
    width: 1px;
    height: 34px;
    background-color: #000;
}

/* bottom bars */
.status {
    flex: none;
    display: grid;
    grid-template-columns: 36% 1fr auto;
    align-items: center;
    height: 28px;
    padding: 0 2px 0 13px;
    background-color: #32609a;
    color: #fff;
}

.status-left, .status-mid {
    display: flex;
    align-items: center;
    gap: 13px;
}

.status-mid {
    gap: 20px;
}

.guide {
    margin-right: 41px;
    border-bottom: 1px solid #fff;
    line-height: 14px;
}

.time {
    font-family: "DejaVu Sans", sans-serif;
    font-size: 13px;
}

.developer {
    font-weight: bold;
    text-shadow: 1px 2px 1px #000;
}

.developer b {
    font-family: "DejaVu Sans", sans-serif;
    font-size: 13px;
}

.news {
    flex: none;
    display: flex;
    align-items: center;
    gap: 15px;
    height: 23px;
    padding: 4px 172px 0 8px;
    color: #555;
}

.news a {
    text-decoration: underline;
}

.moon {
    margin-left: auto;
}

.taskbar {
    flex: none;
    display: flex;
    align-items: center;
    height: 40px;
    border-top: 1px solid #173b63;
    box-shadow: inset 0 1px #7fbbe2;
    background: linear-gradient(52deg, transparent 70%, #8fb8e0 73%, transparent 76%) 900px 0 / 210px 100% no-repeat,
        linear-gradient(to right, #1f5f98, #3287c0 8%, #3e9ed8 26%, #338cd0 42%, #2468ae 61%, #2d7cc5 71%, #1f4f8c 76%, #1a4179);
    color: #fff;
}

.start, .task {
    display: flex;
    align-items: center;
    justify-content: center;
    padding: 0;
    border: 1px solid transparent;
    border-radius: 3px;
    background: none;
}

.start {
    width: 54px;
    height: 39px;
    margin-right: 5px;
}

.task {
    width: 59px;
    height: 39px;
    margin-right: 3px;
}

.current, .open {
    border-color: #cfe4f5;
    background: linear-gradient(135deg, #e6f0fa, #8fbbe2);
    box-shadow: 0 0 0 1px #174a78;
}

.open {
    border-color: #7fb2de;
    background: linear-gradient(135deg, #8ab7e0, #3478bb);
}

.cmd-text {
    fill: #fff;
    font: bold 8px "Liberation Mono", monospace;
}

.ue-text {
    fill: #17130a;
    font: italic bold 15px "Liberation Sans", sans-serif;
}

.word-text {
    fill: #2c5498;
    font: bold 12px "Liberation Serif", serif;
}

.tray {
    display: flex;
    align-items: center;
    gap: 8px;
    margin-left: auto;
}

.lang {
    font-family: "Liberation Mono", monospace;
}

.clock {
    width: 78px;
    text-align: center;
    line-height: 18px;
}

.show-desktop {
    width: 14px;
    height: 39px;
    padding: 0;
    border: 1px solid #6d8db5;
    background-color: #36598a;
}

/* floating widgets */
.speed-ball {
    position: absolute;
    top: 670px;
    right: -24px;
    width: 44px;
    height: 44px;
    padding-left: 3px;
    border: 3px solid #c9cdc9;
    border-radius: 50%;
    background-color: #3cb455;
    color: #fff;
    font-size: 11px;
    font-weight: bold;
    line-height: 38px;
}

.ime {
    position: absolute;
    right: 8px;
    bottom: 40px;
    display: flex;
    align-items: center;
    gap: 7px;
    width: 160px;
    height: 34px;
    padding-left: 13px;
    border: 2px solid #73bd74;
    border-radius: 4px;
    background: linear-gradient(to right, #d5e59b, #e9f8ec 25%, #dcf6ee);
    color: #27a03a;
    font-size: 17px;
    font-weight: bold;
}

.pinwheel {
    position: absolute;
    right: 0;
    bottom: 38px;
}
```
